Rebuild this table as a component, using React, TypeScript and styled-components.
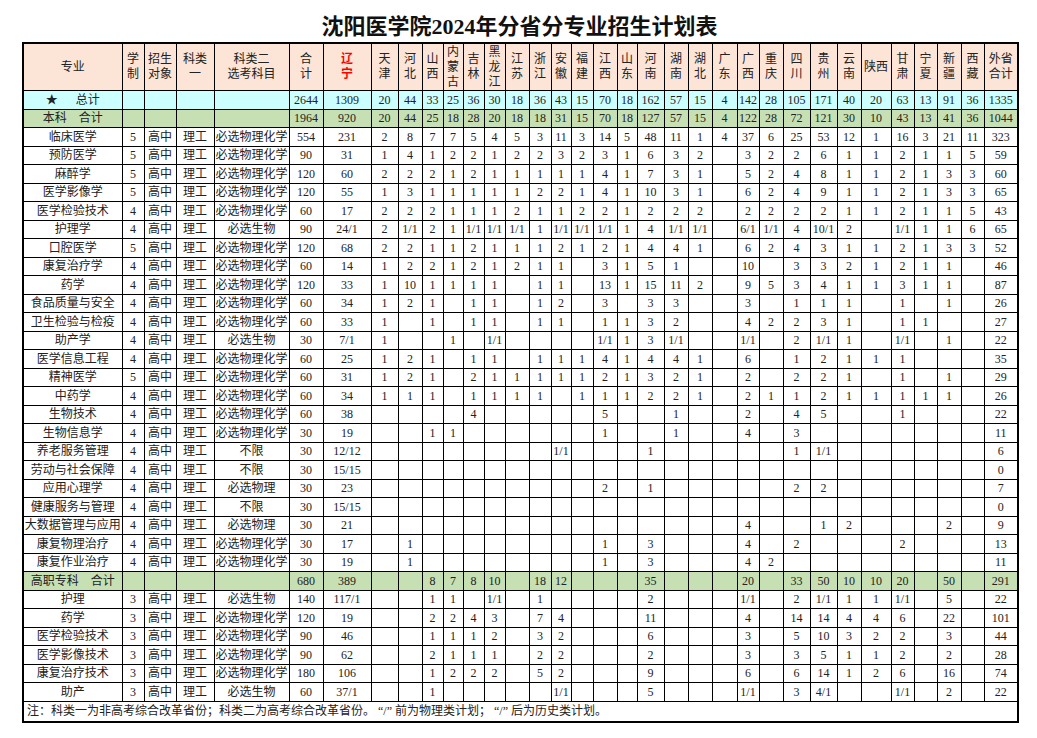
import React from "react";
import styled, { createGlobalStyle } from "styled-components";

const GlobalStyle = createGlobalStyle`
    html, body {
        margin: 0;
        padding: 0;
        background: #fff;
    }
    body {
        font-family: "Liberation Serif", "Noto Sans CJK SC", serif;
        color: #222;
    }
`;

const PROVINCES = [
    "天\n津", "河\n北", "山\n西", "内\n蒙\n古", "吉\n林", "黑\n龙\n江",
    "江\n苏", "浙\n江", "安\n徽", "福\n建", "江\n西", "山\n东",
    "河\n南", "湖\n南", "湖\n北", "广\n东", "广\n西", "重\n庆",
    "四\n川", "贵\n州", "云\n南", "陕西", "甘\n肃", "宁\n夏", "新\n疆", "西\n藏",
];

const LEAD = [
    { label: "专业", width: 99 },
    { label: "学\n制", width: 22 },
    { label: "招生\n对象", width: 32 },
    { label: "科类\n一", width: 38 },
    { label: "科类二\n选考科目", width: 75 },
    { label: "合\n计", width: 34 },
    { label: "辽\n宁", width: 48, red: true },
];

const PROVINCE_WIDTHS = [27, 24, 21, 20, 21, 21, 24, 22, 20, 22, 24, 20, 27, 24, 24, 25, 22, 24, 27, 27, 24, 30, 23, 23, 24, 23];

type Tone = "total" | "sum" | "plain";

interface SheetRow {
    name: string;
    tone: Tone;
    cells: string[];
}

function row(name: string, data: string, tone: Tone = "plain"): SheetRow {
    return { name, tone, cells: data.trim().split(/\s+/).map(v => (v === "-" ? "" : v)) };
}

const ROWS: SheetRow[] = [
    row("★      总计", "- - - - 2644 1309 20 44 33 25 36 30 18 36 43 15 70 18 162 57 15 4 142 28 105 171 40 20 63 13 91 36 1335", "total"),
    row("本科    合计", "- - - - 1964 920 20 44 25 18 28 20 18 18 31 15 70 18 127 57 15 4 122 28 72 121 30 10 43 13 41 36 1044", "sum"),
    row("临床医学", "5 高中 理工 必选物理化学 554 231 2 8 7 7 5 4 5 3 11 3 14 5 48 11 1 4 37 6 25 53 12 1 16 3 21 11 323"),
    row("预防医学", "5 高中 理工 必选物理化学 90 31 1 4 1 2 2 1 2 2 3 2 3 1 6 3 2 - 3 2 2 6 1 1 2 1 1 5 59"),
    row("麻醉学", "5 高中 理工 必选物理化学 120 60 2 2 2 1 2 1 1 1 1 1 4 1 7 3 1 - 5 2 4 8 1 1 2 1 3 3 60"),
    row("医学影像学", "5 高中 理工 必选物理化学 120 55 1 3 1 1 1 1 1 2 2 1 4 1 10 3 1 - 6 2 4 9 1 1 2 1 3 3 65"),
    row("医学检验技术", "4 高中 理工 必选物理化学 60 17 2 2 2 1 1 1 2 1 1 2 2 1 2 2 2 - 2 2 2 2 1 1 2 1 1 5 43"),
    row("护理学", "4 高中 理工 必选生物 90 24/1 2 1/1 2 1 1/1 1/1 1/1 1 1/1 1/1 1/1 1 4 1/1 1/1 - 6/1 1/1 4 10/1 2 - 1/1 1 1 6 65"),
    row("口腔医学", "5 高中 理工 必选物理化学 120 68 2 2 1 1 2 1 1 1 2 1 2 1 4 4 1 - 6 2 4 3 1 1 2 1 3 3 52"),
    row("康复治疗学", "4 高中 理工 必选物理化学 60 14 1 2 2 1 2 1 2 1 1 - 3 1 5 1 - - 10 - 3 3 2 1 2 1 1 - 46"),
    row("药学", "4 高中 理工 必选物理化学 120 33 1 10 1 1 1 1 - 1 1 - 13 1 15 11 2 - 9 5 3 4 1 1 3 1 1 - 87"),
    row("食品质量与安全", "4 高中 理工 必选物理化学 60 34 1 2 1 - 1 1 - 1 2 - 3 - 3 3 - - 3 - 1 1 1 - 1 - 1 - 26"),
    row("卫生检验与检疫", "4 高中 理工 必选物理化学 60 33 1 - 1 - 1 1 - 1 1 - 1 1 3 2 - - 4 2 2 3 1 - 1 1 - - 27"),
    row("助产学", "4 高中 理工 必选生物 30 7/1 1 - - 1 - 1/1 - - - - 1/1 1 3 1/1 - - 1/1 - 2 1/1 1 - 1/1 - 1 - 22"),
    row("医学信息工程", "4 高中 理工 必选物理化学 60 25 1 2 1 - 1 1 - 1 1 1 4 1 4 4 1 - 6 - 1 2 1 1 1 - - - 35"),
    row("精神医学", "5 高中 理工 必选物理化学 60 31 1 2 1 - 2 1 1 1 1 1 2 1 3 2 1 - 2 - 2 2 1 - 1 - 1 - 29"),
    row("中药学", "4 高中 理工 必选物理化学 60 34 1 1 1 - 1 1 1 1 - 1 1 1 2 2 1 - 2 1 1 2 1 1 1 1 1 - 26"),
    row("生物技术", "4 高中 理工 必选物理化学 60 38 - - - - 4 - - - - - 5 - - 1 - - 2 - 4 5 - - 1 - - - 22"),
    row("生物信息学", "4 高中 理工 必选物理化学 30 19 - - 1 1 - - - - - - 1 - - 1 - - 4 - 3 - - - - - - - 11"),
    row("养老服务管理", "4 高中 理工 不限 30 12/12 - - - - - - - - 1/1 - - - 1 - - - - - 1 1/1 - - - - - - 6"),
    row("劳动与社会保障", "4 高中 理工 不限 30 15/15 - - - - - - - - - - - - - - - - - - - - - - - - - - 0"),
    row("应用心理学", "4 高中 理工 必选物理 30 23 - - - - - - - - - - 2 - 1 - - - - - 2 2 - - - - - - 7"),
    row("健康服务与管理", "4 高中 理工 不限 30 15/15 - - - - - - - - - - - - - - - - - - - - - - - - - - 0"),
    row("大数据管理与应用", "4 高中 理工 必选物理 30 21 - - - - - - - - - - - - - - - - 4 - - 1 2 - - - 2 - 9"),
    row("康复物理治疗", "4 高中 理工 必选物理化学 30 17 - 1 - - - - - - - - 1 - 3 - - - 4 - 2 - - - 2 - - - 13"),
    row("康复作业治疗", "4 高中 理工 必选物理化学 30 19 - 1 - - - - - - - - 1 - 3 - - - 4 2 - - - - - - - - 11"),
    row("高职专科    合计", "- - - - 680 389 - - 8 7 8 10 - 18 12 - - - 35 - - - 20 - 33 50 10 10 20 - 50 - 291", "sum"),
    row("护理", "3 高中 理工 必选生物 140 117/1 - - 1 1 - 1/1 - 1 - - - - 2 - - - 1/1 - 2 1/1 1 1 1/1 - 5 - 22"),
    row("药学", "3 高中 理工 必选物理化学 120 19 - - 2 2 4 3 - 7 4 - - - 11 - - - 4 - 14 14 4 4 6 - 22 - 101"),
    row("医学检验技术", "3 高中 理工 必选物理化学 90 46 - - 1 1 1 2 - 3 2 - - - 6 - - - 3 - 5 10 3 2 2 - 3 - 44"),
    row("医学影像技术", "3 高中 理工 必选物理化学 90 62 - - 2 1 1 1 - 2 2 - - - 2 - - - 3 - 3 5 1 1 2 - 2 - 28"),
    row("康复治疗技术", "3 高中 理工 必选物理化学 180 106 - - 1 2 2 2 - 5 2 - - - 9 - - - 6 - 6 14 1 2 6 - 16 - 74"),
    row("助产", "3 高中 理工 必选生物 60 37/1 - - 1 - - - - - 1/1 - - - 5 - - - 1/1 - 3 4/1 - - 1/1 - 2 - 22"),
];

const TONES: Record<Tone, string> = {
    total: "#ccffff",
    sum: "#c6e0b4",
    plain: "#ffffff",
};

const Page = styled.div`
    padding: 12px 0 20px 22px;
`;

const Title = styled.h1`
    width: 995px;
    margin: 0;
    text-align: center;
    font-family: "Liberation Serif", "Noto Sans CJK SC", serif;
    font-size: 22px;
    font-weight: bold;
    line-height: 30px;
    color: #111;
`;

const Sheet = styled.table`
    width: 995px;
    table-layout: fixed;
    border-collapse: collapse;
    border: 2px solid #000;
    font-size: 12px;
`;

const HeadCell = styled.th<{ $red?: boolean }>`
    height: 46px;
    padding: 0;
    border: 1px solid #000;
    background: #fce4d6;
    color: ${props => (props.$red ? "#ff0000" : "#222")};
    font-weight: ${props => (props.$red ? "bold" : "normal")};
    line-height: 15px;
    white-space: pre-line;
    text-align: center;
    vertical-align: middle;
`;

const Row = styled.tr<{ $tone: Tone }>`
    height: 18.5px;
    background: ${props => TONES[props.$tone]};
`;

const Cell = styled.td`
    padding: 0;
    border: 1px solid #000;
    text-align: center;
    vertical-align: middle;
    line-height: 16px;
    white-space: nowrap;
    overflow: hidden;
`;

const NameCell = styled(Cell)`
    white-space: pre;
`;

const NoteCell = styled(Cell)`
    height: 19px;
    padding-left: 3px;
    text-align: left;
`;

export default function App() {
    const outWidth = 34;
    return (
        <Page>
            <GlobalStyle/>
            <Title>沈阳医学院2024年分省分专业招生计划表</Title>
            <Sheet>
                <colgroup>
                    {LEAD.map(col => <col key={col.label} style={{ width: col.width }}/>)}
                    {PROVINCE_WIDTHS.map((w, i) => <col key={i} style={{ width: w }}/>)}
                    <col style={{ width: outWidth }}/>
                </colgroup>
                <thead>
                    <tr>
                        {LEAD.map(col => <HeadCell key={col.label} $red={col.red}>{col.label}</HeadCell>)}
                        {PROVINCES.map(p => <HeadCell key={p}>{p}</HeadCell>)}
                        <HeadCell>{"外省\n合计"}</HeadCell>
                    </tr>
                </thead>
                <tbody>
                    {ROWS.map((r, i) => (
                        <Row key={i} $tone={r.tone}>
                            <NameCell>{r.name}</NameCell>
                            {r.cells.map((c, j) => <Cell key={j}>{c}</Cell>)}
                        </Row>
                    ))}
                    <Row $tone="plain">
                        <NoteCell colSpan={34}>
                            注：科类一为非高考综合改革省份；科类二为高考综合改革省份。 “/” 前为物理类计划； “/” 后为历史类计划。
                        </NoteCell>
                    </Row>
                </tbody>
            </Sheet>
        </Page>
    );
}
